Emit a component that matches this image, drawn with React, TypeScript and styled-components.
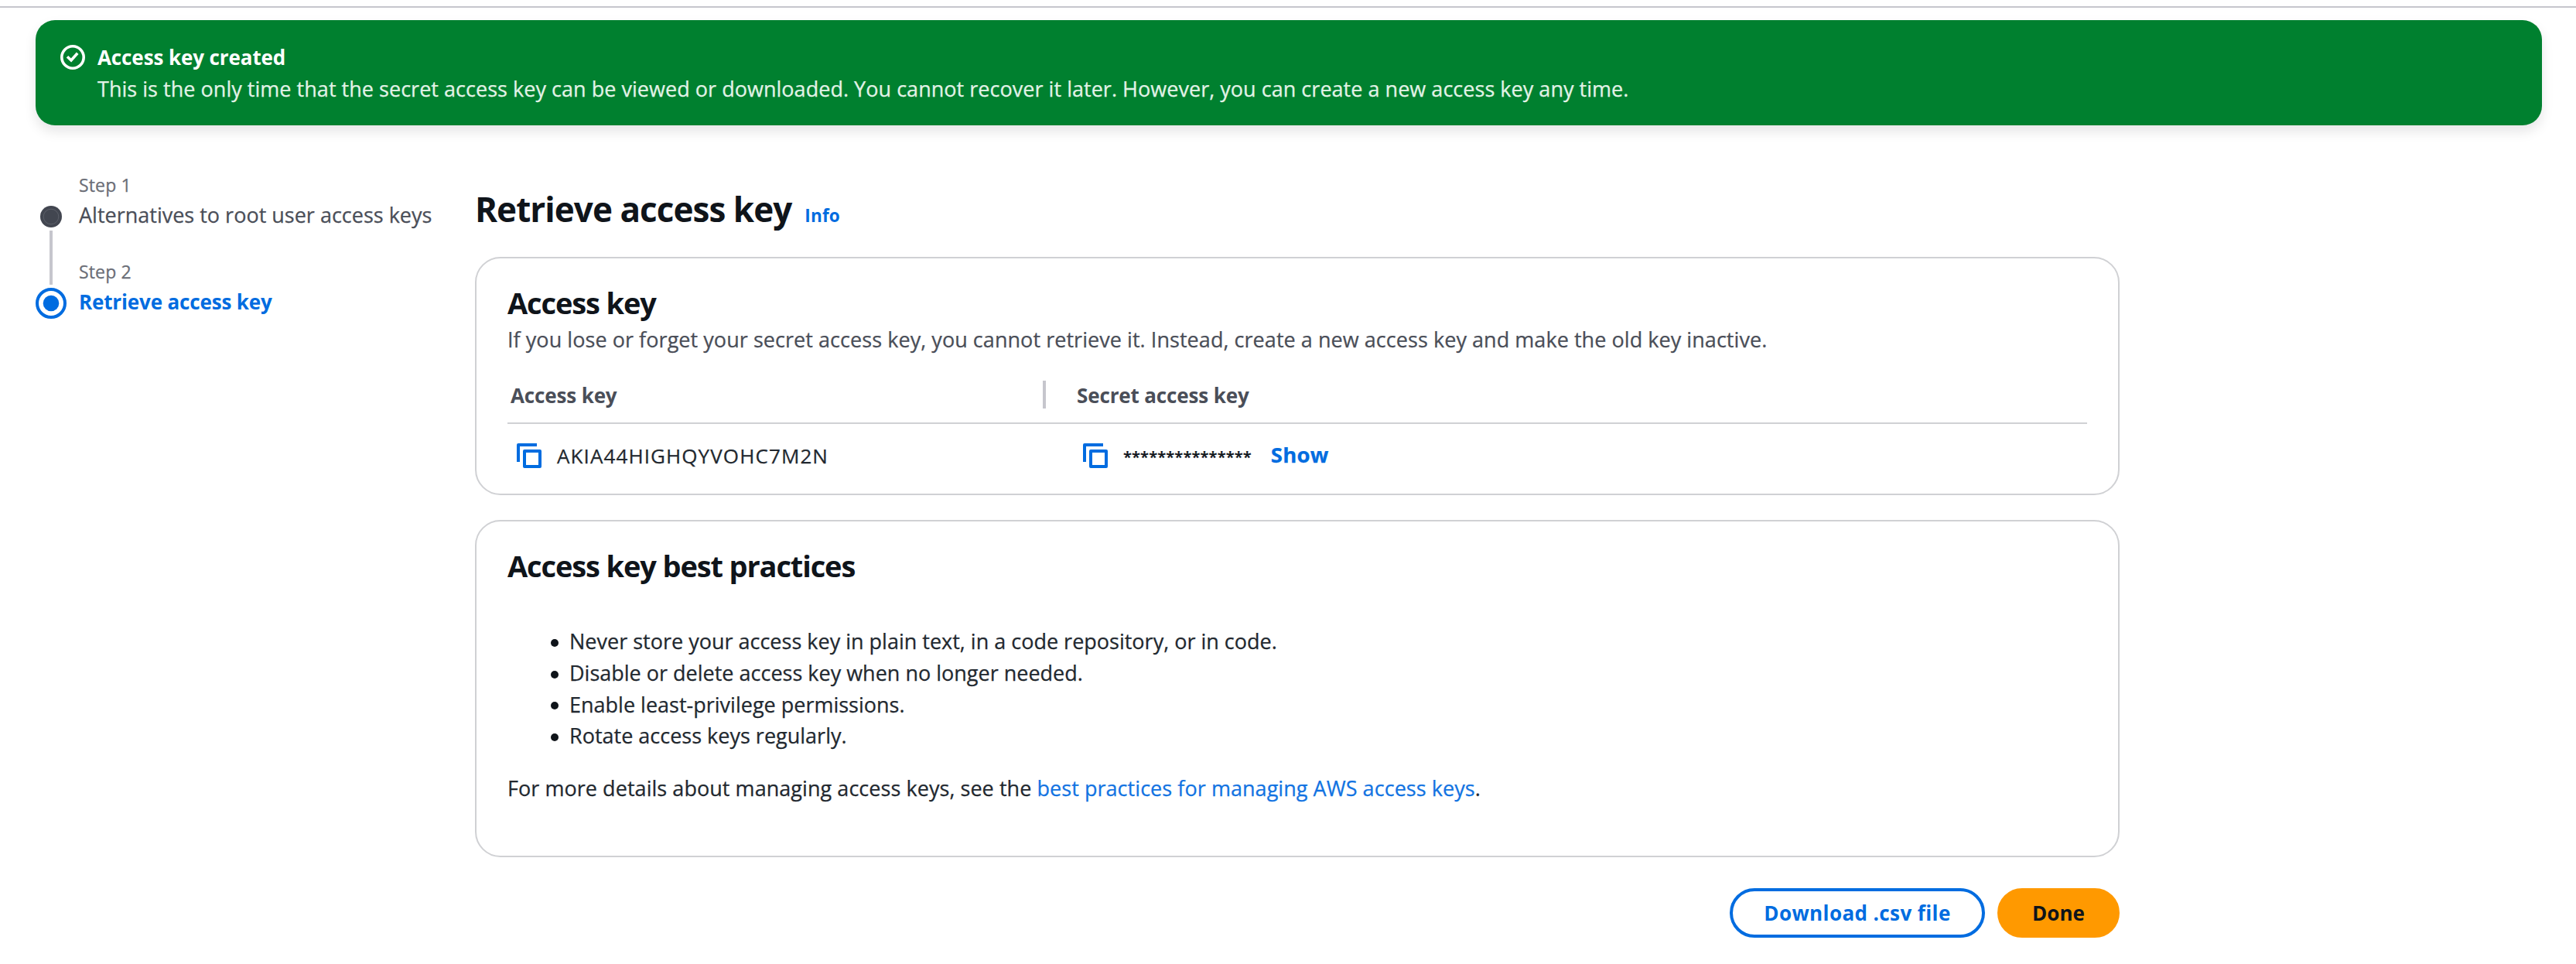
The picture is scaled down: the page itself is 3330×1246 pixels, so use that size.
import React from "react";
import styled, { createGlobalStyle } from "styled-components";

const color = {
  text: "#0f141a",
  body: "#22282f",
  secondary: "#4a4e58",
  muted: "#6b6e77",
  link: "#006ce0",
  textLink: "#1273e2",
  border: "#c6c6cd",
  cardBorder: "#d0d1d4",
  success: "#00802f",
  primary: "#ff9900",
};

const GlobalStyle = createGlobalStyle`
  *, *::before, *::after { box-sizing: border-box; }
  body {
    margin: 0;
    background: #fff;
    color: ${color.body};
    font: 400 27px/40px "Open Sans", "Noto Sans", sans-serif;
    letter-spacing: 0.03px;
    -webkit-text-stroke: 0.25px currentColor;
  }
  h1, h2, p, ul, ol { margin: 0; padding: 0; }
`;

const Page = styled.div`
  width: 3330px;
  height: 1246px;
  padding-top: 8px;
  overflow: hidden;
`;

const TopRule = styled.div`
  height: 2px;
  background: ${color.border};
`;

const Banner = styled.section`
  display: flex;
  gap: 16px;
  height: 136px;
  margin: 16px 44px 0 46px;
  padding: 28px 32px;
  border-radius: 25px;
  background: ${color.success};
  color: #fff;
  box-shadow: 0 8px 16px rgba(0, 7, 22, 0.1);
`;

const BannerIcon = styled.svg`
  flex: none;
  width: 32px;
  height: 32px;
  margin-top: 4px;
`;

const BannerTitle = styled.div`
  font-size: 26px;
  font-weight: 700;
  letter-spacing: -0.1px;
  -webkit-text-stroke: 0;
`;

const BannerText = styled.div`
  margin-top: 1px;
  color: #e2f3e7;
`;

const Columns = styled.div`
  display: grid;
  grid-template-columns: 568px 2126px;
  padding-left: 46px;
`;

const Steps = styled.nav`
  display: flex;
  gap: 16px;
  padding-top: 59px;
`;

const Rail = styled.div`
  display: flex;
  flex-direction: column;
  align-items: center;
  gap: 4px;
  width: 40px;
  padding-top: 45px;
`;

const RailLine = styled.div`
  width: 4px;
  height: 70px;
  background: ${color.border};
`;

const StepList = styled.ol`
  display: flex;
  flex-direction: column;
  gap: 35px;
  list-style: none;
  white-space: nowrap;
`;

const StepLabel = styled.div`
  font-size: 23px;
  line-height: 37px;
  letter-spacing: 0.15px;
  color: ${color.muted};
`;

const StepName = styled.div<{ $active?: boolean }>`
  font-size: ${(p) => (p.$active ? 26 : 27)}px;
  color: ${(p) => (p.$active ? color.link : color.secondary)};
  font-weight: ${(p) => (p.$active ? 700 : 400)};
  letter-spacing: ${(p) => (p.$active ? "-0.15px" : "0")};
  -webkit-text-stroke: ${(p) => (p.$active ? "0" : "0.25px")};
`;

const Main = styled.main`
  display: flex;
  flex-direction: column;
  padding-top: 80px;
`;

const TitleRow = styled.div`
  display: flex;
  align-items: baseline;
  gap: 17px;
  height: 56px;
  margin-bottom: 34px;
`;

const PageTitle = styled.h1`
  font-size: 44px;
  line-height: 56px;
  font-weight: 700;
  letter-spacing: -0.95px;
  color: ${color.text};
  -webkit-text-stroke: 0;
`;

const Link = styled.a`
  color: ${color.link};
  text-decoration: none;
`;

const TextLink = styled(Link)`
  color: ${color.textLink};
`;

const InfoLink = styled(Link)`
  font-size: 22.5px;
  font-weight: 700;
  letter-spacing: 0.2px;
  -webkit-text-stroke: 0;
`;

const Card = styled.section<{ $height: number }>`
  height: ${(p) => p.$height}px;
  padding: 33px 40px 0;
  border: 2px solid ${color.cardBorder};
  border-radius: 33px;
  & + & { margin-top: 32px; }
`;

const CardTitle = styled.h2`
  font-size: 38px;
  line-height: 48px;
  font-weight: 700;
  letter-spacing: -1.13px;
  color: ${color.text};
  -webkit-text-stroke: 0;
`;

const Description = styled.p`
  margin: 4px 0 15px;
  letter-spacing: 0.05px;
  color: ${color.secondary};
`;

const TableRow = styled.div<{ $head?: boolean }>`
  display: grid;
  grid-template-columns: 696px 1fr;
  align-items: center;
  height: ${(p) => (p.$head ? 74 : 81)}px;
  border-bottom: ${(p) => (p.$head ? `2px solid ${color.cardBorder}` : "none")};
`;

const HeadCell = styled.div<{ $divided?: boolean }>`
  display: flex;
  align-items: center;
  height: 36px;
  padding-top: 1px;
  padding-left: ${(p) => (p.$divided ? 4 : 40)}px;
  border-right: ${(p) => (p.$divided ? `4px solid ${color.border}` : "none")};
  font-size: 26px;
  font-weight: 700;
  letter-spacing: -0.14px;
  color: ${color.secondary};
  -webkit-text-stroke: 0;
`;

const Cell = styled.div<{ $indent: number }>`
  display: flex;
  align-items: center;
  gap: 20px;
  padding-left: ${(p) => p.$indent}px;
`;

const CopyGlyph = styled.svg`
  flex: none;
  width: 32px;
  height: 32px;
`;

const KeyText = styled.span`
  font-size: 26px;
  letter-spacing: 1.1px;
`;

const SecretGroup = styled.div`
  display: flex;
  align-items: baseline;
  gap: 25px;
  padding-top: 1px;
`;

const Mask = styled.span`
  font-size: 20px;
  font-weight: 600;
  letter-spacing: 0.1px;
  color: ${color.text};
`;

const ShowLink = styled(Link)`
  font-size: 27.5px;
  font-weight: 700;
  letter-spacing: 0.2px;
`;

const Practices = styled.ul`
  margin: 54px 0 27px;
  padding-left: 56px;
  list-style: none;
`;

const Practice = styled.li`
  display: flex;
  align-items: center;
  gap: 14px;
  line-height: 40.8px;
  letter-spacing: 0;
  &::before {
    content: "";
    width: 10px;
    height: 10px;
    margin-top: 3px;
    border-radius: 50%;
    background: ${color.text};
  }
`;

const Footnote = styled.p`
  letter-spacing: 0.05px;
`;

const Actions = styled.div`
  display: flex;
  justify-content: flex-end;
  gap: 16px;
  margin-top: 40px;
`;

const Button = styled.button<{ $primary?: boolean }>`
  width: ${(p) => (p.$primary ? 158 : 330)}px;
  height: 64px;
  padding: 0;
  border: 4px solid ${(p) => (p.$primary ? color.primary : color.link)};
  border-radius: 32px;
  background: ${(p) => (p.$primary ? color.primary : "#fff")};
  color: ${(p) => (p.$primary ? color.text : color.link)};
  font: inherit;
  font-size: 26px;
  font-weight: 700;
  letter-spacing: ${(p) => (p.$primary ? 0.1 : 0.4)}px;
  -webkit-text-stroke: 0;
`;

const CheckIcon = () => (
  <BannerIcon viewBox="0 0 32 32" fill="none" stroke="#fff" strokeWidth="3.6">
    <circle cx="16" cy="16" r="14.2" />
    <path d="M9 15.2l5 4.8 8.2-9.2" />
  </BannerIcon>
);

const CopyIcon = () => (
  <CopyGlyph viewBox="0 0 32 32" fill="none" stroke={color.link} strokeWidth="4" strokeLinejoin="round">
    <path d="M26 2H2v22" />
    <path d="M10 10h20v20H10z" />
  </CopyGlyph>
);

const DoneMarker = () => (
  <svg width="28" height="28" viewBox="0 0 28 28">
    <circle cx="14" cy="14" r="14" fill="#424650" />
    <circle cx="14" cy="14" r="9.8" fill="none" stroke="#62666f" strokeWidth="0.8" />
  </svg>
);

const ActiveMarker = () => (
  <svg width="40" height="40" viewBox="0 0 40 40">
    <circle cx="20" cy="20" r="18" fill="none" stroke={color.link} strokeWidth="4" />
    <circle cx="20" cy="20" r="10.3" fill={color.link} />
  </svg>
);

const practices = [
  "Never store your access key in plain text, in a code repository, or in code.",
  "Disable or delete access key when no longer needed.",
  "Enable least-privilege permissions.",
  "Rotate access keys regularly.",
];

export default function App() {
  return (
    <>
      <GlobalStyle />
      <Page>
        <TopRule />
        <Banner>
          <CheckIcon />
          <div>
            <BannerTitle>Access key created</BannerTitle>
            <BannerText>
              This is the only time that the secret access key can be viewed or downloaded. You cannot recover it
              later. However, you can create a new access key any time.
            </BannerText>
          </div>
        </Banner>
        <Columns>
          <Steps>
            <Rail>
              <DoneMarker />
              <RailLine />
              <ActiveMarker />
            </Rail>
            <StepList>
              <li>
                <StepLabel>Step 1</StepLabel>
                <StepName>Alternatives to root user access keys</StepName>
              </li>
              <li>
                <StepLabel>Step 2</StepLabel>
                <StepName $active>Retrieve access key</StepName>
              </li>
            </StepList>
          </Steps>
          <Main>
            <TitleRow>
              <PageTitle>Retrieve access key</PageTitle>
              <InfoLink>Info</InfoLink>
            </TitleRow>
            <Card $height={308}>
              <CardTitle>Access key</CardTitle>
              <Description>
                If you lose or forget your secret access key, you cannot retrieve it. Instead, create a new access key
                and make the old key inactive.
              </Description>
              <TableRow $head>
                <HeadCell $divided>Access key</HeadCell>
                <HeadCell>Secret access key</HeadCell>
              </TableRow>
              <TableRow>
                <Cell $indent={12}>
                  <CopyIcon />
                  <KeyText>AKIA44HIGHQYVOHC7M2N</KeyText>
                </Cell>
                <Cell $indent={48}>
                  <CopyIcon />
                  <SecretGroup>
                    <Mask>***************</Mask>
                    <ShowLink>Show</ShowLink>
                  </SecretGroup>
                </Cell>
              </TableRow>
            </Card>
            <Card $height={436}>
              <CardTitle>Access key best practices</CardTitle>
              <Practices>
                {practices.map((item) => (
                  <Practice key={item}>{item}</Practice>
                ))}
              </Practices>
              <Footnote>
                For more details about managing access keys, see the{" "}
                <TextLink>best practices for managing AWS access keys</TextLink>.
              </Footnote>
            </Card>
            <Actions>
              <Button>Download .csv file</Button>
              <Button $primary>Done</Button>
            </Actions>
          </Main>
        </Columns>
      </Page>
    </>
  );
}
